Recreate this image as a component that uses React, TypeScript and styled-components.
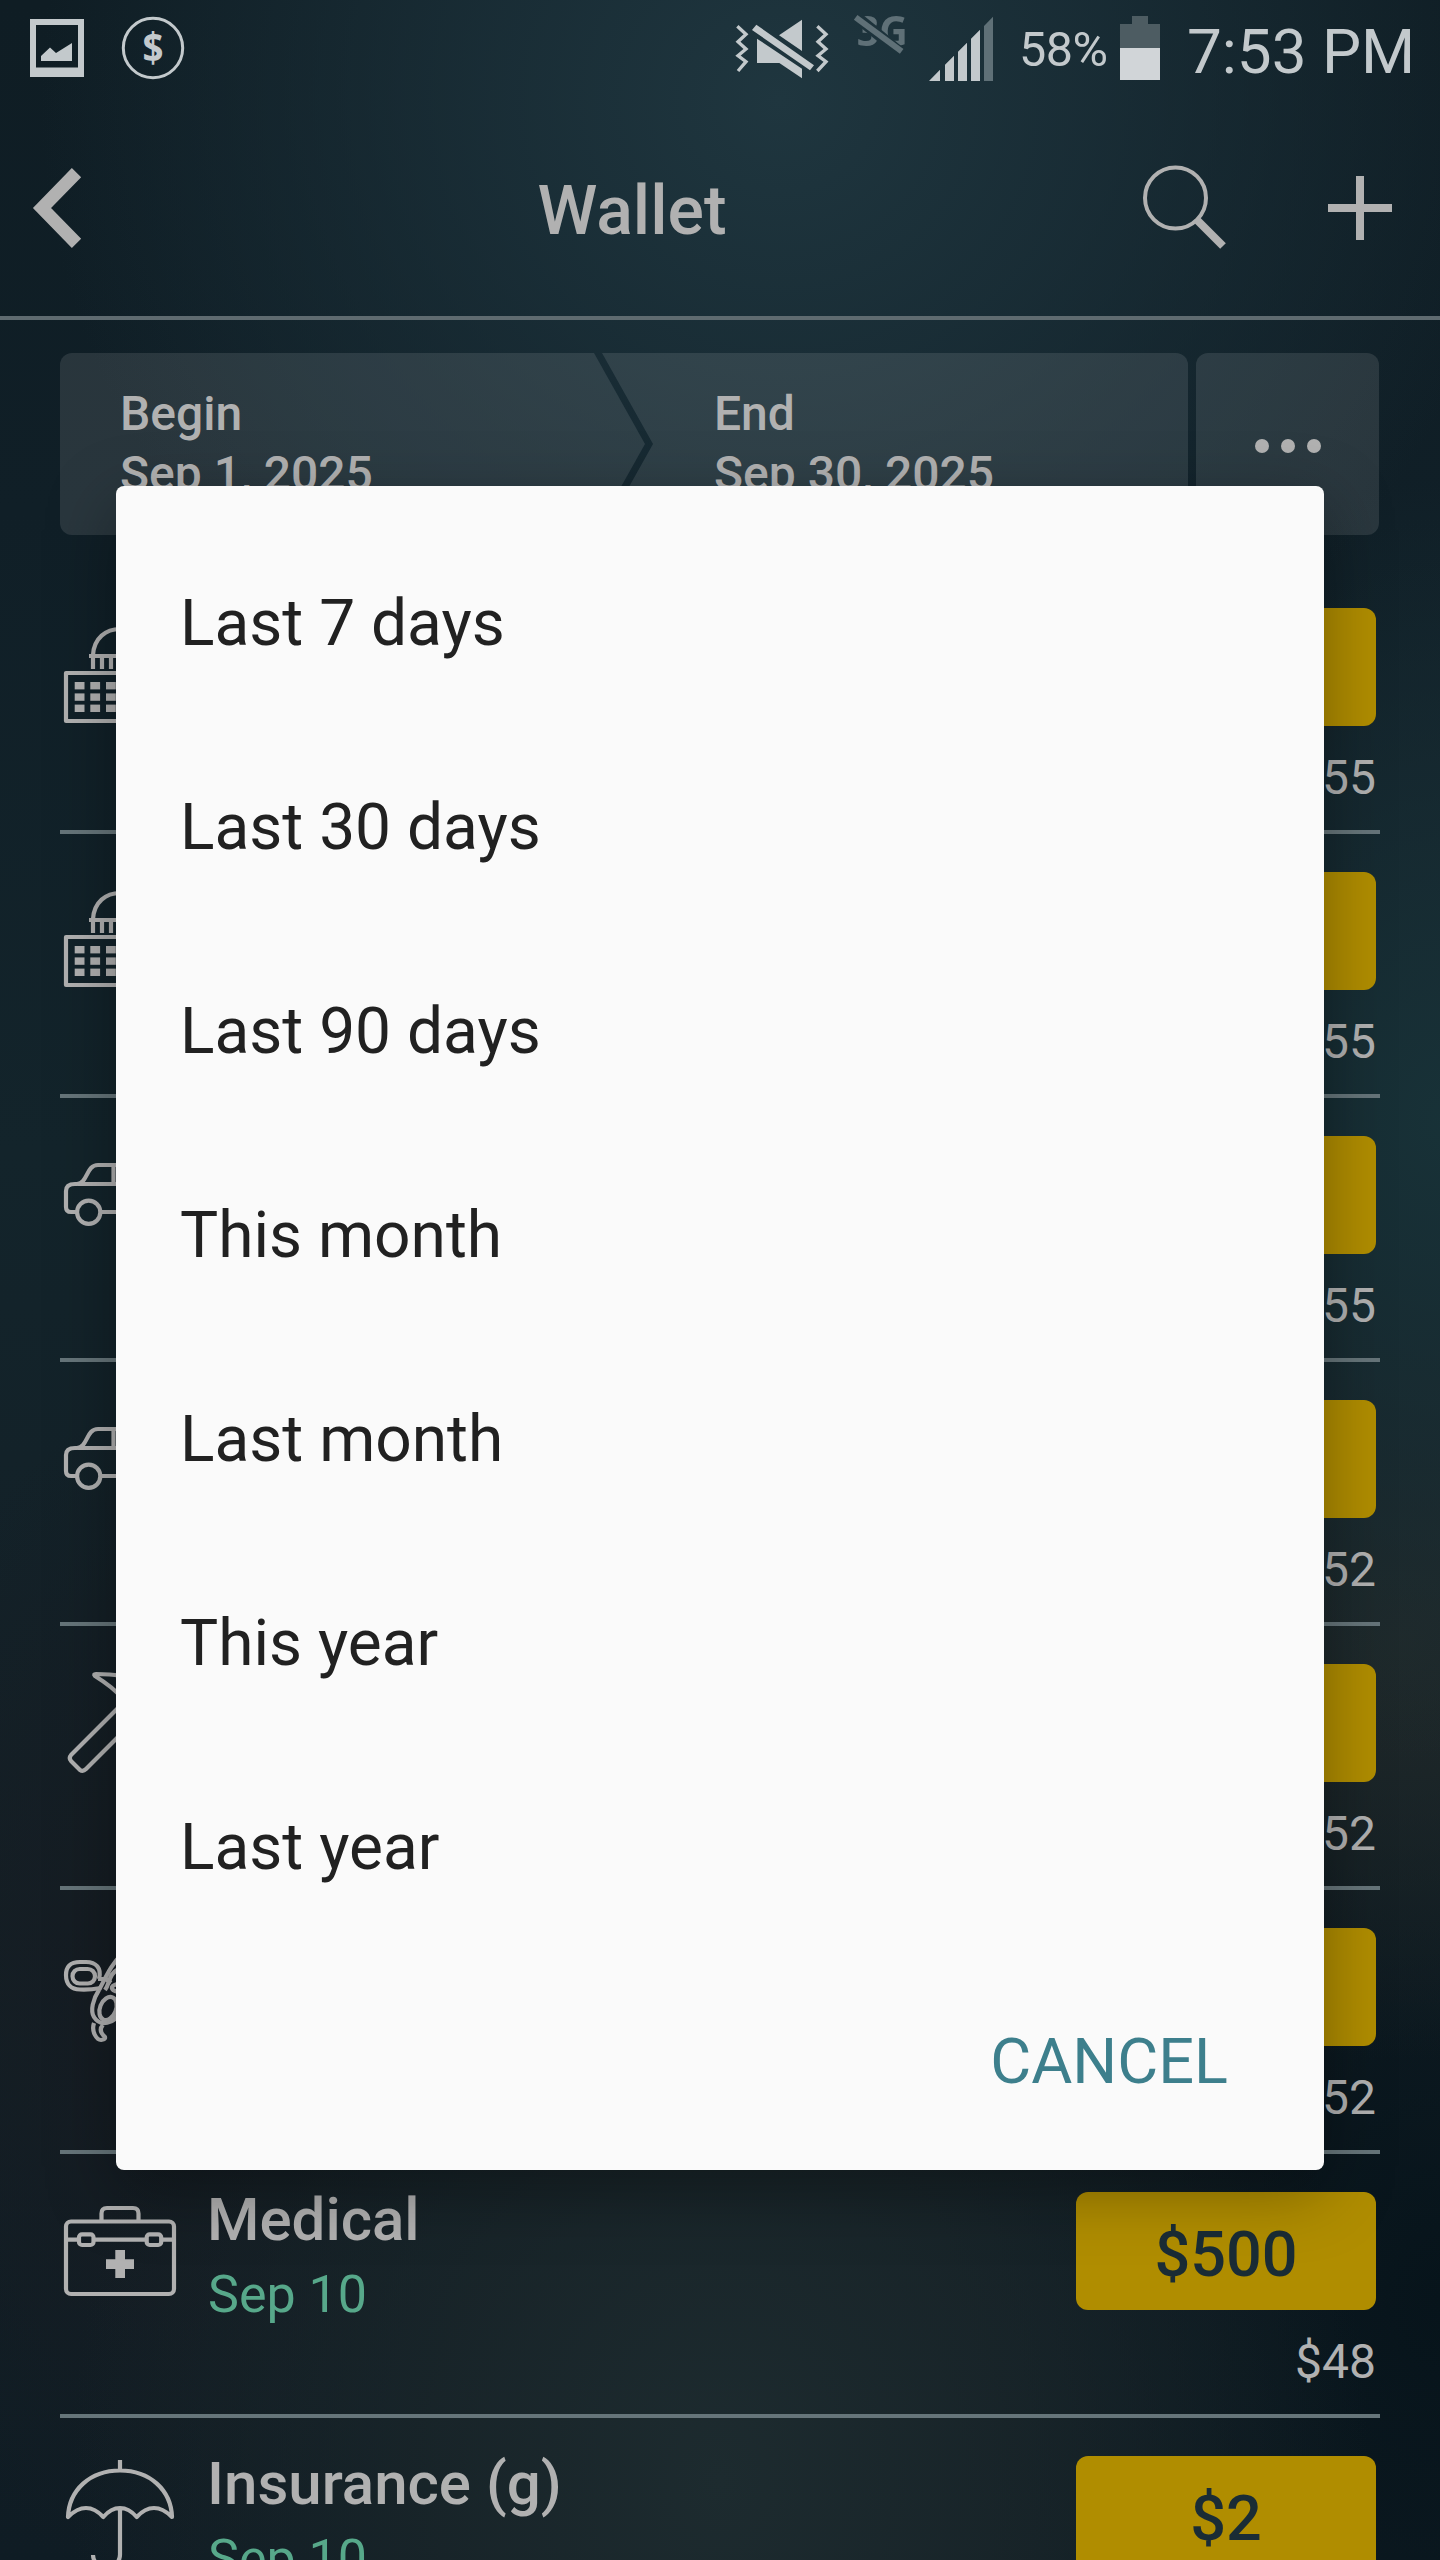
import React from "react";
import styled, { createGlobalStyle } from "styled-components";

const ink = "#b1b1b1";
const status = "#c3c9cc";

const GlobalStyle = createGlobalStyle`
  * { box-sizing: border-box; }
  body {
    margin: 0;
    background: #111f27;
    font-family: Roboto, "Noto Sans", sans-serif;
  }
`;

const Screen = styled.div`
  position: relative;
  display: flex;
  flex-direction: column;
  width: 1440px;
  height: 2560px;
  overflow: hidden;
  color: ${ink};
  background:
    radial-gradient(ellipse 740px 700px at 780px 100px, rgba(31, 54, 63, 1) 0%, rgba(27, 48, 57, 0.8) 42%, rgba(20, 37, 46, 0) 100%),
    radial-gradient(ellipse 420px 640px at 1440px 1120px, rgba(24, 50, 56, 0.95) 0%, rgba(24, 45, 52, 0.65) 50%, rgba(22, 40, 46, 0) 100%),
    radial-gradient(ellipse 420px 420px at 1400px 1640px, rgba(34, 42, 42, 0.9) 0%, rgba(28, 38, 40, 0) 100%),
    radial-gradient(ellipse 650px 800px at 720px 2480px, rgba(29, 43, 47, 1) 0%, rgba(26, 38, 42, 0.8) 45%, rgba(20, 30, 36, 0) 100%),
    radial-gradient(ellipse 500px 700px at 1440px 2300px, #07141b 0%, rgba(8, 21, 28, 0) 100%),
    radial-gradient(ellipse 300px 600px at 160px 2000px, #161c22 0%, rgba(21, 27, 33, 0) 100%),
    linear-gradient(180deg, #0f1d24 0%, #101f27 20%, #13242b 45%, #131f26 75%, #0f1c24 100%);
`;

const StatusBar = styled.header`
  display: flex;
  flex: none;
  align-items: center;
  height: 96px;
  padding: 0 29px 0 30px;
  color: ${status};
`;

const Spacer = styled.div`
  flex: 1;
`;

const Glyph = styled.svg<{ $gap?: number }>`
  display: block;
  flex: none;
  overflow: visible;
  margin-right: ${(p) => p.$gap ?? 0}px;
`;

const Battery = styled.span`
  width: 86px;
  font-size: 48.5px;
  line-height: 60px;
  padding-top: 3px;
  letter-spacing: -0.5px;
  margin-right: 15px;
  white-space: nowrap;
`;

const Clock = styled.span`
  width: 224px;
  font-size: 62px;
  line-height: 70px;
  padding-top: 7px;
  white-space: nowrap;
`;

const TitleBar = styled.div`
  display: grid;
  flex: none;
  grid-template-columns: 336px 1fr 502px;
  align-items: center;
  height: 224px;
  padding: 0 40px 0 30px;
  border-bottom: 4px solid #5f6b70;
`;

const Title = styled.h1`
  margin: 0;
  padding-top: 10px;
  text-align: center;
  font-size: 68px;
  font-weight: 500;
  line-height: 80px;
`;

const Actions = styled.div`
  display: flex;
  justify-content: flex-end;
  align-items: center;
  padding-top: 3px;
`;

const Filters = styled.div`
  display: flex;
  flex: none;
  height: 182px;
  margin: 33px 61px 35px 60px;
`;

const DateSegment = styled.div<{ $kind: "begin" | "end" }>`
  flex: none;
  width: ${(p) => (p.$kind === "begin" ? 585 : 586)}px;
  margin-left: ${(p) => (p.$kind === "begin" ? 0 : -43)}px;
  padding: 31px 0 0 ${(p) => (p.$kind === "begin" ? 60 : 112)}px;
  font-size: 48px;
  font-weight: 500;
  line-height: 60px;
  background: rgba(255, 255, 255, 0.105);
  border-radius: ${(p) => (p.$kind === "begin" ? "12px 0 0 12px" : "0 12px 12px 0")};
  clip-path: ${(p) =>
    p.$kind === "begin"
      ? "polygon(0 0, 534px 0, 585px 50%, 534px 100%, 0 100%)"
      : "polygon(0 0, 100% 0, 100% 100%, 0 100%, 51px 50%)"};
`;

const More = styled.div`
  display: flex;
  flex: 1;
  align-items: center;
  justify-content: center;
  gap: 12px;
  margin-left: 8px;
  padding-top: 4px;
  border-radius: 12px;
  background: rgba(255, 255, 255, 0.105);
`;

const Dot = styled.span`
  width: 14px;
  height: 14px;
  border-radius: 50%;
  background: ${ink};
`;

const Rows = styled.div`
  display: flex;
  flex: none;
  flex-direction: column;
  padding: 0 60px;
`;

const Row = styled.div`
  display: flex;
  flex: none;
  height: 264px;
  border-bottom: 4px solid #66757a;
`;

const IconBox = styled.div`
  width: 120px;
  padding-top: 36px;
`;

const Info = styled.div`
  flex: 1;
  padding: 29px 0 0 27px;
`;

const Name = styled.div`
  font-size: 60px;
  font-weight: 500;
  line-height: 74px;
`;

const Day = styled.div`
  padding-left: 1px;
  font-size: 52px;
  line-height: 76px;
  color: #57a88a;
`;

const Money = styled.div`
  display: flex;
  flex-direction: column;
  align-items: flex-end;
  width: 304px;
  padding: 38px 4px 0 0;
`;

const Amount = styled.div`
  width: 100%;
  height: 118px;
  padding-top: 5px;
  border-radius: 12px;
  background: #b08d00;
  color: #1a2c35;
  text-align: center;
  font-size: 63px;
  font-weight: 500;
  line-height: 115px;
`;

const Balance = styled.div`
  margin-top: 22px;
  font-size: 48px;
  line-height: 60px;
`;

const Overlay = styled.div`
  position: absolute;
  inset: 0;
  padding: 486px 116px 0;
`;

const Dialog = styled.div`
  display: flex;
  flex-direction: column;
  height: 1684px;
  padding: 36px 64px 0;
  border-radius: 8px;
  background: #fafafa;
  color: #212121;
  box-shadow: 0 20px 68px rgba(0, 0, 0, 0.34);
`;

const Option = styled.div`
  height: 204px;
  font-size: 64px;
  line-height: 204px;
`;

const Cancel = styled.div`
  align-self: flex-end;
  margin: 72px 32px 0 0;
  font-size: 63px;
  line-height: 80px;
  color: #3d7f8c;
`;

type IconKind = "bank" | "car" | "hammer" | "scissors" | "kit" | "umbrella";

const Bank = () => (
  <>
    <path d="M33 49C34 32 46 23 60 23S86 32 87 49M29 50H91" />
    <path d="M33 50V63M42 50V63M51 50V63M60 50V63M69 50V63M78 50V63M87 50V63" />
    <rect x="6" y="67" width="108" height="48" />
    {[76, 87.4, 98.6].map((y) =>
      [14.7, 30.3, 46, 61.6, 77.2, 92.8].map((x) => (
        <rect key={`${x}-${y}`} x={x} y={y} width="9.8" height="7.4" fill={ink} stroke="none" />
      ))
    )}
  </>
);

const Car = () => (
  <>
    <path d="M17 78H11Q6 78 6 73V57Q6 50 15 50H17C28 49 26 31 38 31H76L98 50H106Q114 52 114 60V78H104M41 78H79" />
    <path d="M18 50H98M53.5 31V50" />
    <circle cx="28.7" cy="78.3" r="11.6" />
    <circle cx="91.5" cy="78.3" r="11.6" />
  </>
);

const Hammer = () => (
  <>
    <path d="M58 46L11 93Q8.500 96 11 99L20 108Q23 110 26 107L70 63" />
    <path d="M62 36C54 26 43 19 35 14Q33 12 36 12C54 12 66 13 78 22L94 38L108 52L98 62L84 48L70 63L58 46Z" />
  </>
);

const Scissors = () => (
  <>
    <path d="M39 53C42 42 36 36 26 36H20C10 36 6 41 6 49C6 58 11 63.500 20 63.500C28 64 35 63 41 62M38 53H46L51 57" />
    <rect x="12.500" y="43" width="22.500" height="14.500" rx="7.200" />
    <path d="M39 64C47 49 51 39 62 28M39 64C33 73 30 85 34 91C40 101 55 98 59 86M45 64C50 57 49 48 57 44M57 58C50 60 50 64 58 66" />
    <ellipse cx="48" cy="82.500" rx="8" ry="12" transform="rotate(22 48 82.500)" />
    <path d="M34 97C31 106 37 114 41 114Q48 113 43 109C39 104 41 101 43 99" />
  </>
);

const Kit = () => (
  <>
    <rect x="6" y="31.500" width="108" height="72.500" rx="5" />
    <path d="M41.500 31V23.500Q41.500 18 47 18H73Q78.500 18 78.500 23.500V31M6 49.700H19M34 49.700H87M101 49.700H114" />
    <rect x="19" y="44.300" width="14.500" height="10.700" rx="3" />
    <rect x="86.700" y="44.300" width="14.500" height="10.700" rx="3" />
    <path d="M55.300 60H65V69.300H74V79H65V88H55.300V79H46V69.300H55.300Z" fill={ink} stroke="none" />
  </>
);

const Umbrella = () => (
  <path d="M60 6V17M8 63C9 36 30 16.500 60 16.500S111 36 112 63Q103 54 94 54Q85 54 76.700 63Q69 54 60 54Q51 54 43.300 63Q35 54 26 54Q17 54 8 63ZM60 54V100A13.500 13.500 0 0 1 33 101" />
);

const drawings: Record<IconKind, () => React.JSX.Element> = {
  bank: Bank,
  car: Car,
  hammer: Hammer,
  scissors: Scissors,
  kit: Kit,
  umbrella: Umbrella,
};

const CategoryIcon = ({ kind }: { kind: IconKind }) => {
  const Drawing = drawings[kind];
  return (
    <Glyph width="120" height="120" viewBox="0 0 120 120" fill="none" stroke={ink} strokeWidth="4.2" strokeLinejoin="round" strokeLinecap="butt">
      <Drawing />
    </Glyph>
  );
};

const entries: { icon: IconKind; name?: string; day?: string; amount?: string; balance: string }[] = [
  { icon: "bank", balance: "55" },
  { icon: "bank", balance: "55" },
  { icon: "car", balance: "55" },
  { icon: "car", balance: "52" },
  { icon: "hammer", balance: "52" },
  { icon: "scissors", balance: "52" },
  { icon: "kit", name: "Medical", day: "Sep 10", amount: "$500", balance: "$48" },
  { icon: "umbrella", name: "Insurance (g)", day: "Sep 10", amount: "$2", balance: "" },
];

const ranges = ["Last 7 days", "Last 30 days", "Last 90 days", "This month", "Last month", "This year", "Last year"];

export default function App() {
  return (
    <>
      <GlobalStyle />
      <Screen>
        <StatusBar>
          <Glyph $gap={37} width="54" height="58" viewBox="0 0 54 58" fill={status}>
            <path fillRule="evenodd" d="M0 0H54V58H0ZM6 6V48.500H48V6Z" />
            <path d="M11 42V37L20 28.500L26 34L42 24V42Z" />
          </Glyph>
          <Glyph width="64" height="64" viewBox="0 0 64 64">
            <circle cx="32" cy="32" r="29.700" fill="none" stroke={status} strokeWidth="3" />
            <text x="32" y="46" textAnchor="middle" fontFamily="Open Sans" fontWeight="700" fontSize="41" textLength="21" lengthAdjust="spacingAndGlyphs" fill={status}>$</text>
          </Glyph>
          <Spacer />
          <Glyph $gap={20} width="100" height="85" viewBox="0 0 300 255" fill={status}>
            <path d="M22 61L48 85L24 107L48 129L24 149L48 167L24 195M262 61L288 85L264 107L288 129L264 149L288 167L262 195" fill="none" stroke={status} strokeWidth="10" />
            <path d="M216 41V135L147 88ZM81 98L216 188V217L148 171H81ZM66 72L79 56L252 178L240 193Z" />
          </Glyph>
          <Glyph $gap={15} width="60" height="85" viewBox="360 0 180 255">
            <defs>
              <mask id="slash" maskUnits="userSpaceOnUse" x="360" y="0" width="180" height="255">
                <rect x="360" width="180" height="255" fill="#fff" />
                <path d="M366 22L522 148" stroke="#000" strokeWidth="34" />
              </mask>
            </defs>
            <text x="380" y="121" fontFamily="Open Sans" fontWeight="700" fontSize="126" textLength="153" lengthAdjust="spacingAndGlyphs" fill="#5f7077" mask="url(#slash)">3G</text>
            <path d="M377 34L515 136" stroke="#5f7077" strokeWidth="18" />
          </Glyph>
          <Glyph $gap={24} width="70" height="85" viewBox="585 0 210 255" fill={status}>
            <path d="M597 225L630 191V225ZM645 225V176L672 149V225ZM684 225V137L711 110V225ZM723 225V98L750 71V225Z" />
            <path d="M762 225V60L789 32V225Z" fill="#5f7077" />
          </Glyph>
          <Battery>58%</Battery>
          <Glyph $gap={27} width="40" height="64" viewBox="0 0 40 64">
            <path d="M0 8H12V0H28V8H40V32H0Z" fill="#4d5c62" />
            <path d="M0 32H40V64H0Z" fill="#d1d5d8" />
          </Glyph>
          <Clock>7:53 PM</Clock>
        </StatusBar>

        <TitleBar>
          <Glyph width="54" height="88" viewBox="0 0 54 88">
            <path d="M46.500 10.600L12 46L46.500 81.400" fill="none" stroke={ink} strokeWidth="13" />
          </Glyph>
          <Title>Wallet</Title>
          <Actions>
            <Glyph $gap={101} width="84" height="86" viewBox="0 0 84 86" fill="none" stroke={ink}>
              <circle cx="32.500" cy="33" r="30.500" strokeWidth="4" />
              <path d="M54 55L80 81" strokeWidth="8" />
            </Glyph>
            <Glyph $gap={8} width="64" height="64" viewBox="0 0 64 64">
              <path d="M28 0H36V28H64V36H36V64H28V36H0V28H28Z" fill={ink} />
            </Glyph>
          </Actions>
        </TitleBar>

        <Filters>
          <DateSegment $kind="begin">Begin<br />Sep 1, 2025</DateSegment>
          <DateSegment $kind="end">End<br />Sep 30, 2025</DateSegment>
          <More><Dot /><Dot /><Dot /></More>
        </Filters>

        <Rows>
          {entries.map((e, i) => (
            <Row key={i}>
              <IconBox><CategoryIcon kind={e.icon} /></IconBox>
              <Info>
                {e.name && <Name>{e.name}</Name>}
                {e.day && <Day>{e.day}</Day>}
              </Info>
              <Money>
                <Amount>{e.amount}</Amount>
                <Balance>{e.balance}</Balance>
              </Money>
            </Row>
          ))}
        </Rows>

        <Overlay>
          <Dialog>
            {ranges.map((r) => <Option key={r}>{r}</Option>)}
            <Cancel>CANCEL</Cancel>
          </Dialog>
        </Overlay>
      </Screen>
    </>
  );
}
